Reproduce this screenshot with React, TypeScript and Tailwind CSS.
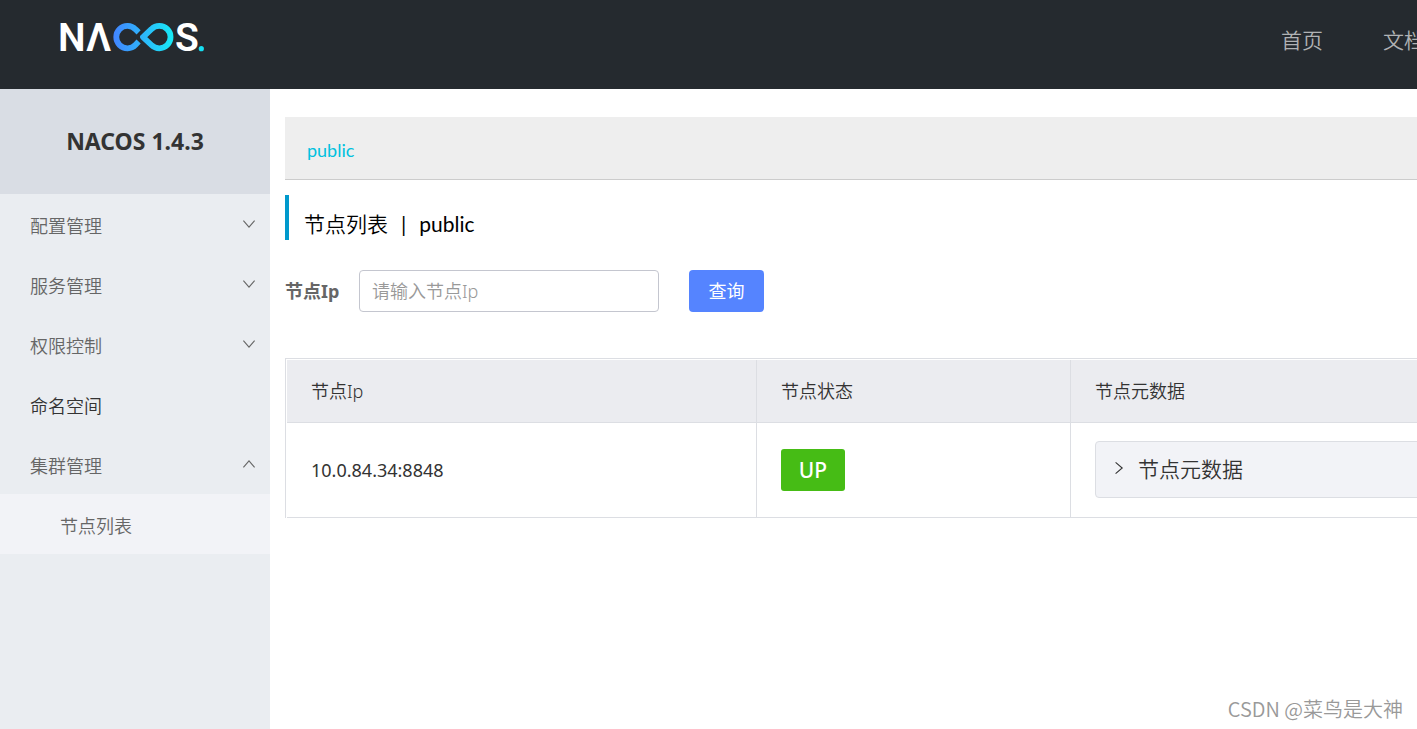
import { useState } from "react";
import clsx from "clsx";

type MenuItem = {
  label: string;
  children?: string[];
};

type ClusterNode = {
  ip: string;
  state: string;
};

const NAV_LINKS = ["首页", "文档"];

const MENU: MenuItem[] = [
  { label: "配置管理", children: ["配置列表", "历史版本", "监听查询"] },
  { label: "服务管理", children: ["服务列表", "订阅者列表"] },
  { label: "权限控制", children: ["用户列表", "角色管理", "权限管理"] },
  { label: "命名空间" },
  { label: "集群管理", children: ["节点列表"] },
];

const NODES: ClusterNode[] = [{ ip: "10.0.84.34:8848", state: "UP" }];

function Logo() {
  return (
    <svg width="150" height="58" viewBox="57 8 150 58" role="img" aria-label="Nacos">
      <defs>
        <linearGradient id="loop" gradientUnits="userSpaceOnUse" x1="114" y1="0" x2="174" y2="0">
          <stop offset="0" stopColor="#4285ff" />
          <stop offset="1" stopColor="#16ebf6" />
        </linearGradient>
      </defs>
      <g fill="#fff" fontFamily="Roboto, sans-serif" fontWeight="600" fontSize="39">
        <text x="58" y="51">N</text>
        <text x="86" y="51">Λ</text>
        <text x="175" y="51">S</text>
      </g>
      <g fill="none" stroke="url(#loop)" strokeWidth="5.8" strokeLinejoin="round">
        <path d="M138.6 32.4 L135.6 29.4 A11.2 11.2 0 1 0 135.6 44.8 L138.6 41.6" />
        <path d="M143 37.1 L151.4 29.2 A11.2 11.2 0 1 1 151.4 45 Z" />
      </g>
      <circle cx="201.3" cy="48.7" r="2.6" fill="#16dff2" />
    </svg>
  );
}

function Chevron({ className }: { className?: string }) {
  return (
    <svg
      width="14"
      height="14"
      viewBox="0 0 14 14"
      fill="none"
      stroke="currentColor"
      strokeWidth="1.1"
      className={className}
      aria-hidden="true"
    >
      <path d="M1.4 3.6 L7 10.2 L12.6 3.6" />
    </svg>
  );
}

function Sidebar() {
  const [open, setOpen] = useState<string[]>(["集群管理"]);

  const toggle = (label: string) =>
    setOpen((prev) => (prev.includes(label) ? prev.filter((l) => l !== label) : [...prev, label]));

  return (
    <aside className="w-[270px] shrink-0 bg-[#eaedf1]">
      <h1 className="flex h-[105px] items-center justify-center bg-[#d9dde4] text-[23px] font-bold text-[#333]">
        NACOS 1.4.3
      </h1>
      <ul className="text-lg text-[#666]">
        {MENU.map((item) => {
          const expanded = open.includes(item.label);

          if (!item.children) {
            return (
              <li key={item.label}>
                <a href="#" className="flex h-[60px] items-center px-[30px] pt-1 text-[#333]">
                  {item.label}
                </a>
              </li>
            );
          }

          return (
            <li key={item.label}>
              <button
                type="button"
                aria-expanded={expanded}
                onClick={() => toggle(item.label)}
                className="flex h-[60px] w-full items-center justify-between pr-[14px] pl-[30px]"
              >
                <span className="pt-1">{item.label}</span>
                <Chevron className={clsx(expanded && "rotate-180")} />
              </button>
              {expanded && (
                <ul>
                  {item.children.map((child) => (
                    <li key={child}>
                      <a href="#" className="flex h-[60px] items-center bg-[#f2f3f7] pt-1 pl-[60px]">
                        {child}
                      </a>
                    </li>
                  ))}
                </ul>
              )}
            </li>
          );
        })}
      </ul>
    </aside>
  );
}

function NodeTable() {
  return (
    <div className="min-w-[1400px] border-t border-l border-[#dcdee3] pt-px pl-px">
      <table className="w-full table-fixed border-separate border-spacing-0 text-left text-lg text-[#333]">
        <colgroup>
          <col className="w-[470px]" />
          <col className="w-[314px]" />
          <col />
        </colgroup>
        <thead>
          <tr className="h-[63px] bg-[#ebecf0]">
            {["节点Ip", "节点状态", "节点元数据"].map((title) => (
              <th key={title} className="border-r border-b border-[#dcdee3] px-6 font-[350]">
                {title}
              </th>
            ))}
          </tr>
        </thead>
        <tbody>
          {NODES.map((node) => (
            <tr key={node.ip} className="h-[95px]">
              <td className="border-r border-b border-[#dcdee3] px-6 font-normal">{node.ip}</td>
              <td className="border-r border-b border-[#dcdee3] px-6">
                <span className="flex h-[42px] w-16 items-center justify-center rounded-[3px] bg-[#46bc15] text-[21px] font-medium text-white">
                  {node.state}
                </span>
              </td>
              <td className="border-r border-b border-[#dcdee3] px-6 pb-px">
                <button
                  type="button"
                  className="flex h-[57px] w-full items-center gap-3 rounded border border-[#dcdee3] bg-[#f2f3f7] pl-4 text-[21px]"
                >
                  <Chevron className="mb-1 -rotate-90" />
                  <span>节点元数据</span>
                </button>
              </td>
            </tr>
          ))}
        </tbody>
      </table>
    </div>
  );
}

export default function App() {
  const [ip, setIp] = useState("");

  return (
    <div className="relative flex min-h-screen flex-col overflow-hidden bg-white font-['Noto_Sans','Noto_Sans_CJK_SC',sans-serif] font-[350]">
      <header className="flex h-[89px] items-center justify-between bg-[#252a2f] pb-4 pl-[57px]">
        <a href="#">
          <Logo />
        </a>
        <nav className="-mr-2 flex gap-[60px] pt-2 text-[21px] whitespace-nowrap text-[#b0b2b4]">
          {NAV_LINKS.map((link) => (
            <a key={link} href="#">
              {link}
            </a>
          ))}
        </nav>
      </header>

      <div className="flex flex-1">
        <Sidebar />

        <main className="min-w-0 flex-1 overflow-hidden pt-7 pl-[15px]">
          <div className="flex h-[63px] items-center border-b border-[#ccc] bg-[#eee] pt-1 pl-[22px] font-['Lato','Noto_Sans_CJK_SC',sans-serif] text-lg font-normal">
            <a href="#" className="text-[#00c1de]">
              public
            </a>
          </div>

          <h2 className="mt-[15px] flex h-[45px] items-center gap-[13px] border-l-4 border-[#09c] pt-3 pl-[15px] font-['Lato','Noto_Sans_CJK_SC',sans-serif] text-[21px] font-normal text-black">
            <span className="font-[350]">节点列表</span>
            <span>|</span>
            <span>public</span>
          </h2>

          <form className="mt-[30px] mb-[46px] flex items-center" onSubmit={(e) => e.preventDefault()}>
            <label htmlFor="node-ip" className="w-[74px] text-lg font-bold text-[#666]">
              节点Ip
            </label>
            <input
              id="node-ip"
              value={ip}
              onChange={(e) => setIp(e.target.value)}
              placeholder="请输入节点Ip"
              className="h-[42px] w-[300px] rounded border border-[#c4c6cf] px-3 text-lg placeholder:text-[#999]"
            />
            <button type="submit" className="ml-[30px] h-[42px] w-[75px] rounded bg-[#5584ff] text-lg font-normal text-white">
              查询
            </button>
          </form>

          <NodeTable />
        </main>
      </div>

      <span className="absolute right-[14px] bottom-[6px] font-['Noto_Sans_CJK_SC',sans-serif] text-xl text-[#999]">
        CSDN @菜鸟是大神
      </span>
    </div>
  );
}
